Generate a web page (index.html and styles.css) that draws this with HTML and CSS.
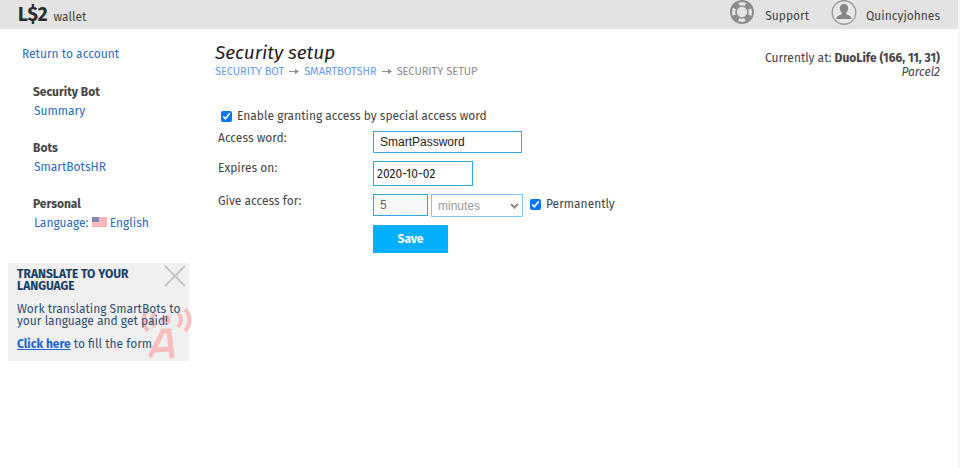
FILE: index.html
```
<!DOCTYPE html>
<html lang="en">
<head>
    <meta charset="UTF-8">
    <meta name="viewport" content="width=device-width, initial-scale=1.0">
    <title>Security setup</title>
    <link rel="stylesheet" href="styles.css">
</head>
<body>

    <header class="topbar">
        <div class="wallet"><strong>L$2</strong> <span>wallet</span></div>
        <nav class="user-nav">
            <a href="#">
                <svg width="26" height="26" viewBox="0 0 26 26" fill="none" stroke="#8c8c8c">
                    <circle cx="12" cy="12" r="8.500" stroke-width="6" stroke="#e6e6e6"/>
                    <circle cx="12" cy="12" r="8.500" stroke-width="6" stroke-dasharray="6.676 6.676" stroke-dashoffset="-3.338"/>
                    <circle cx="12" cy="12" r="11" stroke-width="2"/>
                    <circle cx="12" cy="12" r="6" stroke-width="1.500"/>
                </svg>
                <span>Support</span>
            </a>
            <a href="#">
                <svg width="26" height="26" viewBox="0 0 26 26">
                    <circle cx="13" cy="12.500" r="11.800" fill="#e8e8e8" stroke="#999" stroke-width="1.400"/>
                    <path d="M13 4c2.700 0 4.200 1.800 4.200 4.400 0 1.900-.8 3.500-2 4.400v1.100c1 .9 5.200 1.400 5.400 5.100H5.400c.2-3.700 4.400-4.200 5.400-5.100v-1.100c-1.200-.9-2-2.500-2-4.400C8.800 5.800 10.300 4 13 4z" fill="#858585"/>
                </svg>
                <span>Quincyjohnes</span>
            </a>
        </nav>
    </header>

    <div class="page">
        <aside class="sidebar">
            <a class="return" href="#">Return to account</a>

            <div class="menu">
                <h2>Security Bot</h2>
                <a href="#">Summary</a>
            </div>
            <div class="menu">
                <h2>Bots</h2>
                <a href="#">SmartBotsHR</a>
            </div>
            <div class="menu">
                <h2>Personal</h2>
                <a href="#">Language:
                    <svg class="flag" width="15" height="10" viewBox="0 0 15 10">
                        <rect width="15" height="10" fill="#fbc4c4"/>
                        <path d="M0 1h15M0 4h15M0 7h15M0 9.500h15" stroke="#f9a3a3"/>
                        <rect width="7" height="5" fill="#8585b8"/>
                    </svg>
                    English</a>
            </div>

            <div class="promo">
                <svg class="antenna" width="54" height="56" viewBox="0 0 54 56" fill="none" stroke="#f8bdbd">
                    <circle cx="27" cy="16" r="5" fill="#f8bdbd" stroke="none"/>
                    <path d="M16 9q-6 7 0 14M39 9q6 7 0 14M9 5q-9 11 0 22M46 5q9 11 0 22" stroke-width="4"/>
                    <path d="M11 53L24 27h6l3 27M15 46l18-1" stroke-width="5"/>
                </svg>
                <button class="close" type="button" aria-label="Close">
                    <svg width="22" height="22" viewBox="0 0 22 22" stroke="#c4c4c4" stroke-width="2">
                        <path d="M1 1l20 20M21 1L1 21"/>
                    </svg>
                </button>
                <h3>TRANSLATE TO YOUR LANGUAGE</h3>
                <p>Work translating SmartBots to your language and get paid!</p>
                <p><a href="#">Click here</a> to fill the form</p>
            </div>
        </aside>

        <main>
            <div class="heading">
                <div>
                    <h1>Security setup</h1>
                    <nav class="breadcrumbs">
                        <a href="#">SECURITY BOT</a>
                        <svg width="10" height="6" viewBox="0 0 10 6" fill="#8c8c8c"><path d="M0 2h6V0l4 2.500L6 5V3H0z"/></svg>
                        <a href="#">SMARTBOTSHR</a>
                        <svg width="10" height="6" viewBox="0 0 10 6" fill="#8c8c8c"><path d="M0 2h6V0l4 2.500L6 5V3H0z"/></svg>
                        <span>SECURITY SETUP</span>
                    </nav>
                </div>
                <div class="location">
                    Currently at: <strong>DuoLife (166, 11, 31)</strong><br>
                    <em>Parcel2</em>
                </div>
            </div>

            <form>
                <label class="check enable"><input type="checkbox" checked> Enable granting access by special access word</label>

                <div class="row">
                    <label for="word">Access word:</label>
                    <input type="text" id="word" value="SmartPassword">
                </div>
                <div class="row">
                    <label for="expires">Expires on:</label>
                    <input type="text" id="expires" value="2020-10-02">
                </div>
                <div class="row">
                    <label for="amount">Give access for:</label>
                    <input type="text" id="amount" value="5" disabled>
                    <div class="select">
                        <select id="unit" aria-label="Unit" disabled>
                            <option>minutes</option>
                        </select>
                        <svg width="9" height="6" viewBox="0 0 9 6" fill="none" stroke="#8a8a8a" stroke-width="2"><path d="M1 1l3.500 3.500L8 1"/></svg>
                    </div>
                    <label class="check"><input type="checkbox" checked> Permanently</label>
                </div>
                <button class="save" type="submit">Save</button>
            </form>
        </main>
    </div>

</body>
</html>
```
FILE: styles.css
```
* {
    box-sizing: border-box;
}
body {
    margin: 0;
    min-height: 100vh;
    border-right: 2px solid #f6f6f6;
    font-family: 'Fira Sans', 'Noto Sans', sans-serif;
    font-size: 12px;
    line-height: 14px;
    color: #444;
    background: #fff;
}
a {
    color: #2a6cc0;
    text-decoration: none;
}
h1, h2, h3, p {
    margin: 0;
}

/* Top bar */
.topbar {
    display: flex;
    justify-content: space-between;
    height: 29px;
    padding: 0 18px;
    background: #e3e3e3;
}
.wallet {
    display: flex;
    align-items: baseline;
    gap: 6px;
    line-height: 29px;
}
.wallet strong {
    font-size: 19px;
    color: #2b2b2b;
}
.user-nav {
    display: flex;
    gap: 22px;
}
.user-nav a {
    display: flex;
    gap: 9px;
    color: #444;
}
.user-nav span {
    line-height: 32px;
}

.page {
    display: flex;
}

/* Sidebar */
.sidebar {
    width: 189px;
    flex: none;
    padding: 17px 0 0 8px;
}
.return {
    display: block;
    margin: 0 0 21px 14px;
    line-height: 16px;
}
.menu {
    margin: 0 0 19px 25px;
    line-height: 18px;
}
.menu h2 {
    font-size: 12px;
    line-height: 19px;
}
.menu a {
    display: block;
    padding-left: 1px;
}
.promo {
    position: relative;
    margin-top: 31px;
    padding: 5px 4px 11px 9px;
    background: #f0f0f0;
    color: #2d4f73;
    line-height: 12px;
}
.promo > * {
    position: relative;
}
.promo h3 {
    margin-right: 40px;
    font-size: 12px;
    line-height: 12px;
    color: #173d66;
}
.promo p {
    margin-top: 11px;
}
.promo a {
    color: #1a66d6;
    font-weight: bold;
    text-decoration: underline;
}
.promo .close {
    position: absolute;
    top: 2px;
    right: 3px;
    padding: 0;
    border: 0;
    background: none;
    cursor: pointer;
}
.promo .antenna {
    position: absolute;
    right: -4px;
    bottom: 1px;
}

/* Content */
main {
    flex: 1;
    padding: 14px 18px 0 26px;
}
.heading {
    display: flex;
    justify-content: space-between;
}
h1 {
    font-size: 19px;
    font-weight: normal;
    font-style: italic;
    line-height: 20px;
    color: #1d1d1d;
}
.breadcrumbs {
    display: flex;
    align-items: center;
    gap: 5px;
    line-height: 18px;
    font-size: 11px;
    color: #8c8c8c;
}
.breadcrumbs a {
    color: #6a9cf0;
}
.location {
    padding-top: 8px;
    text-align: right;
}

/* Form */
form {
    margin-top: 28px;
    padding-left: 3px;
}
.check {
    display: flex;
    align-items: center;
    gap: 5px;
}
input[type="checkbox"] {
    width: 11px;
    height: 11px;
    margin: 0;
    accent-color: #0075ff;
}
.enable {
    margin: 0 0 8px 3px;
}
.row {
    display: flex;
    align-items: flex-start;
    gap: 3px;
    margin-bottom: 8px;
}
.row > label:first-child {
    width: 152px;
}
.row .check {
    margin: 3px 0 0 4px;
}
input[type="text"], select {
    height: 22px;
    padding: 0 6px;
    border: 1px solid #35a5ea;
    border-radius: 0;
    background: #fff;
    font-family: 'Liberation Sans', sans-serif;
    font-size: 12px;
    color: #222;
}
#word {
    width: 149px;
}
#expires {
    width: 100px;
    height: 25px;
    padding: 0 3px;
    font-family: inherit;
}
#amount {
    width: 55px;
    background: #f8f8f8;
    color: #666;
}
.select {
    position: relative;
}
.select svg {
    position: absolute;
    top: 9px;
    right: 4px;
}
select {
    display: block;
    width: 92px;
    height: 23px;
    border-color: #85c9f2;
    color: #999;
    opacity: 1;
    appearance: none;
}
.save {
    display: block;
    width: 75px;
    height: 28px;
    margin-left: 155px;
    border: 0;
    background: #00b0ff;
    color: #fff;
    font-family: inherit;
    font-size: 12px;
    font-weight: bold;
    cursor: pointer;
}
```
